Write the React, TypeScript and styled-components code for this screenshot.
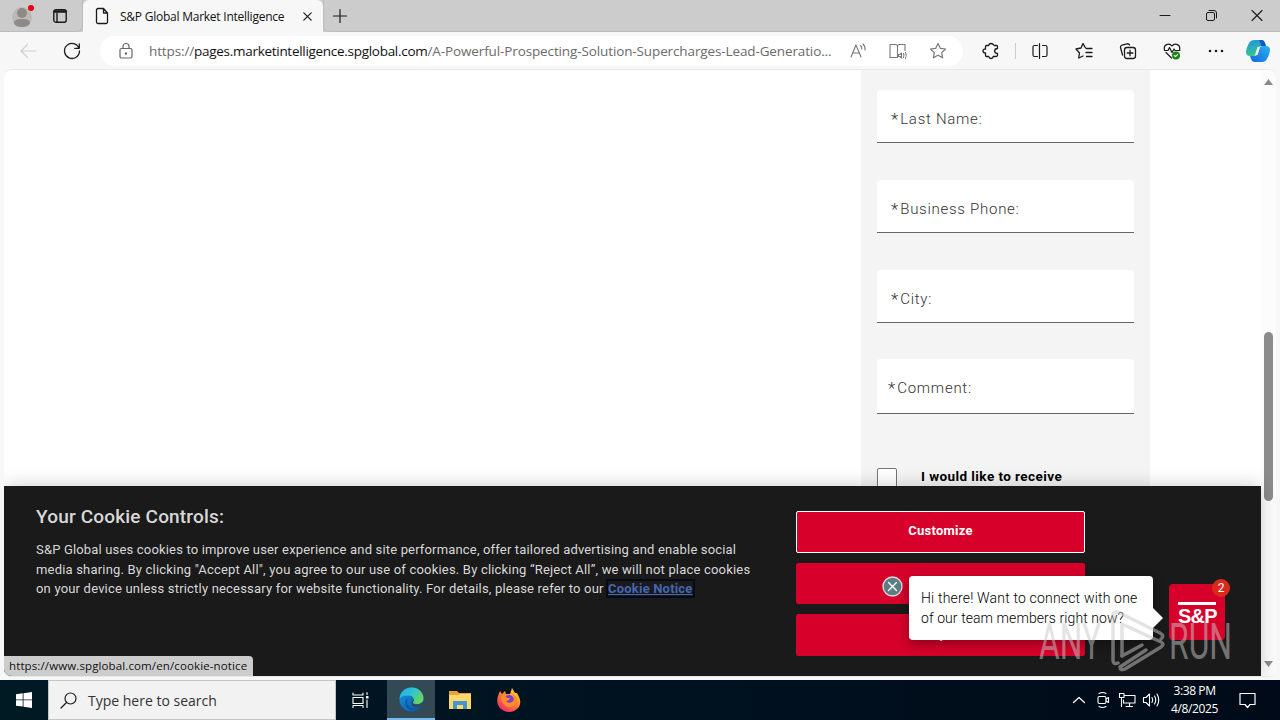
import React from 'react'
import styled, { createGlobalStyle } from 'styled-components'

const GlobalStyle = createGlobalStyle`
  * {
    box-sizing: border-box;
  }
  body {
    margin: 0;
    overflow: hidden;
  }
`

const ui = '"Open Sans", "Noto Sans", sans-serif'
const brand = 'Roboto, "Liberation Sans", sans-serif'

const Desktop = styled.div`
  width: 1280px;
  height: 720px;
  display: flex;
  flex-direction: column;
  background: #f7f7f7;
  font-family: ${ui};
  overflow: hidden;
`

const Label = styled.span<{ $size?: number; $gap?: number; $color?: string; $weight?: number }>`
  font-size: ${(p) => p.$size ?? 12}px;
  letter-spacing: ${(p) => p.$gap ?? 0}px;
  color: ${(p) => p.$color ?? '#111'};
  font-weight: ${(p) => p.$weight ?? 400};
  white-space: nowrap;
`

/* browser chrome */

const TabStrip = styled.div`
  display: flex;
  height: 32px;
  flex: none;
  background: #ccc;
`

const TabStripStart = styled.div`
  display: flex;
  align-items: center;
  gap: 18px;
  width: 83px;
  padding-left: 12px;
  border-right: 1px solid #bdbdbd;
  border-bottom: 1px solid #bdbdbd;
  border-bottom-right-radius: 6px;
`

const Tab = styled.div`
  display: flex;
  align-items: center;
  width: 240px;
  padding: 0 11px 0 12px;
  background: #f7f7f7;
  border-radius: 6px 6px 0 0;
`

const TabTitle = styled(Label)`
  flex: 1;
  margin-left: 11px;
`

const TabStripEnd = styled.div`
  flex: 1;
  display: flex;
  align-items: center;
  justify-content: space-between;
  padding: 0 17px 0 9px;
  border-left: 1px solid #bdbdbd;
  border-bottom: 1px solid #bdbdbd;
  border-bottom-left-radius: 6px;
`

const WindowButtons = styled.div`
  display: flex;
  align-items: center;
  gap: 35px;
`

const Toolbar = styled.div`
  display: flex;
  align-items: center;
  height: 37px;
  flex: none;
  padding: 0 10px 0 19px;
`

const NavIcons = styled.div`
  display: flex;
  gap: 26px;
`

const AddressBar = styled.div`
  display: flex;
  align-items: center;
  flex: none;
  width: 863px;
  height: 30px;
  margin-left: 19px;
  padding: 0 16px 0 18px;
  background: #fff;
  border-radius: 15px;
`

const Url = styled(Label)`
  margin-left: 15px;

  b {
    color: #111;
    font-weight: 400;
    letter-spacing: -0.29px;
  }
`

const AddressIcons = styled.div`
  display: flex;
  align-items: center;
  gap: 21px;
  margin-left: auto;
`

const ToolbarIcons = styled.div`
  display: flex;
  align-items: center;
  gap: 26px;
  padding-left: 19px;
`

const Divider = styled.i`
  width: 1px;
  height: 16px;
  margin: 0 -11px;
  background: #ccc;
`

const CopilotSvg = styled.svg`
  flex: none;
  margin-left: -5px;
`

const Viewport = styled.div`
  position: relative;
  display: flex;
  height: 608px;
  flex: none;
  margin: 0 4px;
  background: #fff;
  border: 1px solid #e8e8e8;
  border-width: 1px 0;
  border-radius: 8px;
  overflow: hidden;
`

const Page = styled.div`
  width: 1257px;
`

const Scrollbar = styled.div`
  display: flex;
  flex-direction: column;
  align-items: center;
  justify-content: space-between;
  width: 15px;
  padding: 9px 0;
  background: #fcfcfc;
`

const Thumb = styled.i`
  width: 9px;
  height: 169px;
  margin-top: 87px;
  border-radius: 5px;
  background: #8b8b8b;
`

/* form */

const FormPanel = styled.div`
  width: 289px;
  height: 416px;
  margin-left: 857px;
  padding: 20px 16px 0;
  background: #f4f4f4;
  font-family: ${brand};
`

const Field = styled.div<{ $tall?: boolean }>`
  display: flex;
  align-items: center;
  width: 257px;
  height: ${(p) => (p.$tall ? 55 : 53)}px;
  margin-bottom: ${(p) => (p.$tall ? 54 : 37)}px;
  padding: ${(p) => (p.$tall ? '4px 0 0 11px' : '5px 0 0 14px')};
  background: #fff;
  border-bottom: 1px solid #666;
  border-radius: 4px 4px 0 0;

  &:nth-child(3) {
    margin-bottom: 36px;
  }
`

const OptIn = styled.label`
  display: flex;
  gap: 24px;
  line-height: 17px;
`

const Checkbox = styled.i`
  width: 20px;
  height: 20px;
  background: #fff;
  border: 1px solid #767676;
  border-radius: 2px;
`

/* cookie banner */

const CookieBanner = styled.section`
  position: absolute;
  left: 0;
  bottom: 0;
  display: flex;
  width: 1257px;
  height: 190px;
  padding: 0 0 0 32px;
  background: #1a1a1a;
  box-shadow: 0 0 18px rgba(0, 0, 0, 0.2);
  color: #d8d8d8;
  font-family: ${brand};
`

const CookieText = styled.div`
  width: 760px;
  padding-top: 18px;
`

const CookieTitle = styled.h2`
  margin: 0 0 10px;
  font-size: 19px;
  font-weight: 500;
  letter-spacing: 0.18px;
  line-height: 25px;
`

const CookieLine = styled.div`
  height: 19.5px;
  line-height: 19.5px;
`

const CookieLink = styled.a`
  margin-left: 1px;
  outline: 2px solid #050a18;
  color: #4665b5;
  font-weight: 700;
  text-decoration: underline;
`

const CookieActions = styled.div`
  display: flex;
  flex-direction: column;
  gap: 10px;
  width: 289px;
  padding-top: 25px;
`

const CookieButton = styled.button<{ $focused?: boolean }>`
  height: ${(p) => (p.$focused ? 42 : 41)}px;
  padding: 0 0 3px;
  background: #d6002a;
  border: 1px solid ${(p) => (p.$focused ? '#fff' : '#d6002a')};
  border-radius: 2px;
  color: #fff;
  font: 700 13px ${brand};
  letter-spacing: 0.25px;

  &:last-child {
    height: 42px;
    padding-bottom: 4px;
  }
`

/* chat */

const ChatBubble = styled.div`
  position: absolute;
  left: 905px;
  top: 506px;
  width: 244px;
  height: 64px;
  padding: 12px;
  background: #fff;
  border-radius: 4px;
  box-shadow: 0 4px 12px rgba(0, 0, 0, 0.35);
  font-family: ${brand};
  line-height: 20px;

  &::after {
    content: '';
    position: absolute;
    left: 244px;
    top: 32px;
    border: 10px solid transparent;
    border-left-color: #fff;
    border-right: 0;
  }
`

const ChatLine = styled(Label)`
  display: block;
`

const ChatDismiss = styled.div`
  position: absolute;
  left: 878px;
  top: 506px;
  width: 21px;
  height: 21px;
`

const ChatLauncher = styled.div`
  position: absolute;
  left: 1165px;
  top: 514px;
  width: 56px;
  height: 56px;
  padding-top: 18px;
  background: #d6002a;
  border-radius: 4px;
  color: #fff;
  font: 700 20px/22px "Liberation Sans", sans-serif;
  text-align: center;
`

const LauncherText = styled.span`
  display: block;
  width: 38px;
  margin: 0 auto;
  border-top: 3px solid #fff;
  letter-spacing: -0.8px;
`

const UnreadBadge = styled.div`
  position: absolute;
  left: 43px;
  top: -5px;
  width: 18px;
  height: 18px;
  border-radius: 9px;
  background: #da291c;
  font: 400 12px/18px ${brand};
`

const StatusBubble = styled.div`
  position: absolute;
  left: 0;
  bottom: 0;
  height: 20px;
  width: 249px;
  padding-left: 5px;
  background: #ccc;
  border-top-right-radius: 4px;
  line-height: 17px;
`

const Watermark = styled.svg`
  position: absolute;
  left: 1034px;
  top: 539px;
  opacity: 0.5;
`

/* taskbar */

const Taskbar = styled.div`
  display: flex;
  align-items: stretch;
  height: 40px;
  margin-top: 3px;
  flex: none;
  background: linear-gradient(90deg, #001a24, #00101e 60%, #000a18);
`

const TaskButton = styled.div<{ $width?: number; $active?: boolean }>`
  display: flex;
  align-items: center;
  justify-content: center;
  width: ${(p) => p.$width ?? 48}px;
  background: ${(p) => (p.$active ? '#334a54' : 'transparent')};
  border-bottom: ${(p) => (p.$active ? '2px solid #76b9ed' : '0')};
`

const SearchBox = styled.div`
  display: flex;
  align-items: center;
  gap: 11px;
  width: 288px;
  padding-left: 11px;
  background: #f2f2f2;
  border: 1px solid #c4c4c4;
`

const Tray = styled.div`
  display: flex;
  align-items: center;
  gap: 8px;
  margin-left: auto;
  padding-right: 24px;
`

const Clock = styled.div`
  display: flex;
  flex-direction: column;
  align-items: center;
  width: 55px;
  margin-right: 9px;
  line-height: 18px;
`

const IconSvg = styled.svg`
  flex: none;
  fill: none;
  stroke-linecap: round;
  stroke-linejoin: round;
  overflow: visible;
`

type IconProps = {
  w?: number
  h?: number
  color?: string
  stroke?: number
  children: React.ReactNode
}

function Icon({ w = 18, h = 18, color = '#1b1b1b', stroke = 1.2, children }: IconProps) {
  return (
    <IconSvg
      width={w}
      height={h}
      viewBox={`0 0 ${w} ${h}`}
      stroke={color}
      strokeWidth={stroke}
    >
      {children}
    </IconSvg>
  )
}

const star = 'M9 1.5l2.3 4.8 5.2.7-3.8 3.6.9 5.2L9 13.3l-4.6 2.5.9-5.2L1.5 7l5.2-.7z'

function Tabs() {
  return (
    <TabStrip>
      <TabStripStart>
        <Icon w={23} h={24} stroke={0}>
          <circle cx='10' cy='13' r='10' fill='#bdb9b7' />
          <circle cx='10' cy='9' r='5' fill='#8e8a88' />
          <path d='M2 19c0-3 3-4 8-4s8 1 8 4c-1 3-4 4-8 4s-7-1-8-4z' fill='#8e8a88' />
          <circle cx='19' cy='4' r='3' fill='#e3000f' />
        </Icon>
        <Icon w={14} h={14} stroke={1.4}>
          <rect x='.8' y='.8' width='12.4' height='12.4' rx='2' />
          <path d='M1.5 2.5h11' strokeWidth='2.5' />
          <path d='M4 4v9' />
        </Icon>
      </TabStripStart>
      <Tab>
        <Icon w={14} h={18} stroke={1.3}>
          <path d='M8.5 1.5H3a1.5 1.5 0 0 0-1.5 1.5v12A1.5 1.5 0 0 0 3 16.5h8a1.5 1.5 0 0 0 1.5-1.5V6zM8.5 1.5V6h4' />
        </Icon>
        <TabTitle $gap={-0.24}>S&amp;P Global Market Intelligence</TabTitle>
        <Icon w={9} h={9} stroke={1.2}>
          <path d='M.8.8l7.4 7.4M8.2.8L.8 8.2' />
        </Icon>
      </Tab>
      <TabStripEnd>
        <Icon w={14} h={14}>
          <path d='M7 .5v13M.5 7h13' />
        </Icon>
        <WindowButtons>
          <Icon w={11} h={11} stroke={1}>
            <path d='M0 5.5h10' />
          </Icon>
          <Icon w={11} h={11} stroke={1}>
            <rect x='.5' y='2.5' width='8' height='8' rx='1.5' />
            <path d='M3 .5h5a2.5 2.5 0 0 1 2.5 2.5v5' />
          </Icon>
          <Icon w={11} h={11} stroke={1.1}>
            <path d='M0 .5l10 10M10 .5l-10 10' />
          </Icon>
        </WindowButtons>
      </TabStripEnd>
    </TabStrip>
  )
}

function AddressRow() {
  return (
    <Toolbar>
      <NavIcons>
        <Icon color='#cfcfcf'>
          <path d='M17 9H2M8.5 2.5L2 9l6.5 6.5' />
        </Icon>
        <Icon stroke={1.3}>
          <path d='M15.9 6A7.5 7.5 0 1 0 16.5 9M16.300 1.8v4.5h-4.5' />
        </Icon>
      </NavIcons>
      <AddressBar>
        <Icon w={16} h={18} color='#666'>
          <rect x='2' y='6.5' width='12' height='9.5' rx='1.5' />
          <path d='M5 6.5V4.5a3 3 0 0 1 6 0v2' />
          <circle cx='8' cy='11.5' r='.6' fill='#666' />
        </Icon>
        <Url $size={13.5} $color='#6b6b6b' $gap={-0.12}>
          https://<b>pages.marketintelligence.spglobal.com</b>/A-Powerful-Prospecting-Solution-Supercharges-Lead-Generatio...
        </Url>
        <AddressIcons>
          <Icon color='#777' stroke={1.1}>
            <path d='M2 15L7 3l5 12M3.5 11h7M11.5 3.5q1.5 1.5 1.2 3.5M14 2q2.5 2.5 2 6' />
          </Icon>
          <Icon w={20} color='#777' stroke={1.1}>
            <path d='M9.5 15.5H2V2.5h5.5q2 0 2 2 0-2 2-2H17v6M9.5 4.5v11' />
            <path d='M10.5 12.5v2H12l1.5 1.5v-5L12 12.5zM15.5 11.5q1 2 0 4M17.5 10.5q1.5 3 0 6' />
          </Icon>
          <Icon color='#777'>
            <path d={star} />
          </Icon>
        </AddressIcons>
      </AddressBar>
      <ToolbarIcons>
        <Icon stroke={1.3}>
          <path d='M6.5 3.500h-2q-1 0-1 1V7q-2.5 0-2.5 2t2.5 2v2.5q0 1 1 1h2.3q.3 2 2.2 2t2.2-2h2.3q2 0 2-1V11.500q-2.8 0-2.8-2.5t2.8-2.5V4.500q0-1-1-1h-2.3Q10.800 1.500 9 1.500T6.500 3.500z' />
        </Icon>
        <Divider />
        <Icon stroke={1.2}>
          <path d='M6.5 3.5H3.500q-1.500 0-1.500 1.500v8q0 1.500 1.500 1.500h3M11.500 3.500h3q1.500 0 1.500 1.500v8q0 1.500-1.500 1.500h-3M8.500 1.500v15' />
        </Icon>
        <Icon stroke={1.3}>
          <path d='M10.5 6L8 1.500 6 6 1 7l3.500 4-.8 5L8 14M11.500 6.500H17M11 10.500h6M11.500 14.500H17' />
        </Icon>
        <Icon stroke={1.3}>
          <rect x='5.5' y='5.5' width='11' height='11' rx='2.5' />
          <path d='M3.500 13L1.500 5.500Q1.200 3.800 3 3.200L8 1.800q1.800-.4 2.600 1.200M11 8.200v5.600M8.200 11h5.600' />
        </Icon>
        <Icon stroke={1.2}>
          <path d='M1.500 8C0 3 6 0 9 4c3-4 9-1 7.500 4M1.500 8.500h3.500l1.500-3 2.500 5 2-3.500 1 1.500h5M3 10.500L8.500 16' />
          <circle cx='13' cy='13.5' r='4' fill='#16820d' stroke='none' />
          <path d='M11.300 13.500l1.200 1.200 2.200-2.400' stroke='#fff' />
        </Icon>
        <Icon>
          <g fill='#1b1b1b' stroke='none'>
            <circle cx='3' cy='9' r='1.3' />
            <circle cx='9' cy='9' r='1.3' />
            <circle cx='15' cy='9' r='1.3' />
          </g>
        </Icon>
        <CopilotLogo />
      </ToolbarIcons>
    </Toolbar>
  )
}

function CopilotLogo() {
  return (
    <CopilotSvg width='24' height='22' viewBox='0 0 24 22'>
      <defs>
        <linearGradient id='cpA' x1='0' y1='0' x2='.3' y2='1'>
          <stop offset='0' stopColor='#1f8fe8' />
          <stop offset='1' stopColor='#37c98b' />
        </linearGradient>
        <linearGradient id='cpB' x1='0' y1='1' x2='1' y2='0'>
          <stop offset='0' stopColor='#1668e0' />
          <stop offset='1' stopColor='#29b3ee' />
        </linearGradient>
      </defs>
      <path d='M9 0h7q2 0 3 3l1 3h-5q-2 0-3 3l-1 4q-1 3-4 3H4q-4 0-4-4 0-3 3-9Q4.5 0 9 0z' fill='url(#cpA)' />
      <path d='M15 22H8q-2 0-3-3l-1-3h5q2 0 3-3l1-4q1-3 4-3h3q4 0 4 4 0 3-3 9-1.5 3-4 3z' fill='url(#cpB)' />
      <path d='M13 0h3q2 0 3 3l1 3h-5q-1-5-2-6z' fill='#1558bd' />
      <path d='M11.5 7H14l-2.5 8H9z' fill='#f7f7f7' />
    </CopilotSvg>
  )
}

const fields = [
  { label: '*Last Name:' },
  { label: '*Business Phone:' },
  { label: '*City:' },
  { label: '*Comment:', tall: true },
]

function LeadForm() {
  return (
    <FormPanel>
      {fields.map(({ label, tall }) => (
        <Field key={label} $tall={tall}>
          <Label $size={17} $gap={2} $color='#333' $weight={300}>
            {label[0]}
          </Label>
          <Label $size={15} $gap={0.73} $color='#333' $weight={300}>
            {label.slice(1)}
          </Label>
        </Field>
      ))}
      <OptIn>
        <Checkbox />
        <Label $size={13.5} $gap={0.43} $weight={700} $color='#000'>
          I would like to receive
        </Label>
      </OptIn>
    </FormPanel>
  )
}

function Cookies() {
  return (
    <CookieBanner>
      <CookieText>
        <CookieTitle>Your Cookie Controls:</CookieTitle>
        <CookieLine>
          <Label $size={13} $gap={0.17} $color='#d8d8d8'>
            S&amp;P Global uses cookies to improve user experience and site performance, offer tailored advertising and enable social
          </Label>
        </CookieLine>
        <CookieLine>
          <Label $size={13} $gap={0.19} $color='#d8d8d8'>
            media sharing. By clicking "Accept All", you agree to our use of cookies. By clicking “Reject All”, we will not place cookies
          </Label>
        </CookieLine>
        <CookieLine>
          <Label $size={13} $gap={0.19} $color='#d8d8d8'>
            on your device unless strictly necessary for website functionality. For details, please refer to our{' '}
            <CookieLink>Cookie Notice</CookieLink>
          </Label>
        </CookieLine>
      </CookieText>
      <CookieActions>
        <CookieButton $focused>Customize</CookieButton>
        <CookieButton />
        <CookieButton>Accept All</CookieButton>
      </CookieActions>
    </CookieBanner>
  )
}

function Chat() {
  return (
    <>
      <ChatDismiss>
        <Icon w={21} h={21} color='#fff' stroke={1.4}>
          <circle cx='10.5' cy='10.5' r='9.5' fill='#5d7d86' stroke='#d8d8d8' />
          <path d='M6.5 6.5l8 8M14.5 6.5l-8 8' />
        </Icon>
      </ChatDismiss>
      <ChatBubble>
        <ChatLine $size={14} $gap={0.18} $weight={300} $color='#000'>Hi there! Want to connect with one</ChatLine>
        <ChatLine $size={14} $gap={0.08} $weight={300} $color='#000'>of our team members right now?</ChatLine>
      </ChatBubble>
      <ChatLauncher>
        <LauncherText>S&amp;P</LauncherText>
        <UnreadBadge>2</UnreadBadge>
      </ChatLauncher>
    </>
  )
}

function AnyRun() {
  return (
    <Watermark width='196' height='64' viewBox='0 0 196 64' fill='#c9c9c9'>
      <g fontFamily='Roboto, sans-serif' fontSize='50'>
        <text x='1' y='50' textLength='62' lengthAdjust='spacingAndGlyphs'>ANY</text>
        <text x='131' y='50' textLength='63' lengthAdjust='spacingAndGlyphs'>RUN</text>
      </g>
      <g fill='none' stroke='#c9c9c9' strokeWidth='3.5' strokeLinejoin='round' strokeLinecap='round'>
        <path d='M80 54q-5 2-5-3V8q0-7 7-4l40 20q5 3 1 6' />
        <path d='M84 47V15l39 18q4 2 0 5L87 60q-5 2-5-2l26-17' />
        <path d='M84 47l20-11' />
      </g>
    </Watermark>
  )
}

function TaskbarRow() {
  return (
    <Taskbar>
      <TaskButton>
        <svg width='16' height='16' viewBox='0 0 16 16' fill='#fff'>
          <path d='M0 2.3L6.7 1.3v6.2H0zM7.5 1.2L16 0v7.5H7.5zM0 8.3h6.7v6.3L0 13.7zM7.5 8.3H16V16l-8.5-1.2z' />
        </svg>
      </TaskButton>
      <SearchBox>
        <Icon w={17} h={17}>
          <circle cx='10.5' cy='6.5' r='5.5' />
          <path d='M6.5 10.5L1 16' />
        </Icon>
        <Label $size={14} $color='#333'>Type here to search</Label>
      </SearchBox>
      <TaskButton $width={51}>
        <Icon w={20} h={16} color='#fff' stroke={1.1}>
          <path d='M1 1v2h10V1M1 5.5h10v6H1zM1 15.5v-2h10v2M15 .5v2M15 8v7.5' />
          <path d='M14.5 4.5h1.5v1.5h-1.5z' fill='#fff' />
        </Icon>
      </TaskButton>
      <TaskButton $active>
        <svg width='25' height='25' viewBox='0 0 25 25'>
          <defs>
            <linearGradient id='edT' x1='0' y1='0' x2='1' y2='.6'>
              <stop offset='0' stopColor='#22a6e8' />
              <stop offset='.5' stopColor='#2fc3d5' />
              <stop offset='1' stopColor='#65d85a' />
            </linearGradient>
            <linearGradient id='edB' x1='0' y1='0' x2='1' y2='1'>
              <stop offset='0' stopColor='#1799e0' />
              <stop offset='1' stopColor='#0b4fa3' />
            </linearGradient>
          </defs>
          <circle cx='12.5' cy='12.5' r='12' fill='url(#edB)' />
          <path d='M.6 12C1 5 6 .5 12.5.5c7 0 12 5 12 10.5 0 4-3 6-6.5 6-3 0-4.5-1-4-2 1.5-2 1-6-3.5-6.5C6 8 2 9 .6 12z' fill='url(#edT)' />
          <path d='M9 11c-3 5 1 11 7 10.5 3 0 5-1 6.5-2.5-5 5.5-15 6-16-2C6 14 7 12 9 11z' fill='#0c59a4' />
          <path d='M14 15c-1 1.5 1 2.5 4 2.5 2 0 4-.7 5.500-2l-1 3.5c-4 2.5-10 1.5-10-3 0-2 1-3 2-4 .5 1 .2 2-.5 3z' fill='#334a54' />
        </svg>
      </TaskButton>
      <TaskButton $width={50}>
        <svg width='22' height='20' viewBox='0 0 22 20'>
          <path d='M0 1h8l2 2h12v16H0z' fill='#e8a33d' />
          <path d='M0 5h9l2-1h11v15H0z' fill='#ffd76b' />
          <path d='M4 11h14v8h-4v-4H8v4H4z' fill='#3f97d3' />
        </svg>
      </TaskButton>
      <TaskButton>
        <svg width='24' height='24' viewBox='0 0 24 24'>
          <defs>
            <linearGradient id='ffA' x1='.9' y1='0' x2='.2' y2='1'>
              <stop offset='0' stopColor='#ffe14a' />
              <stop offset='.45' stopColor='#ff8a2a' />
              <stop offset='1' stopColor='#f0226e' />
            </linearGradient>
          </defs>
          <path d='M1 8l2-5 2 3 3-3 1 3 4 0 2-6 3 5 2 0 2 4c4 8-2 15-10 15S-2 17 1 8z' fill='url(#ffA)' />
          <circle cx='12' cy='12' r='5' fill='#7a3fd0' />
          <path d='M4 8q5-1 6 2l3 0q-1 3-4 3 2 3 6 1 4-3 0-8 6 2 5 8-3 6-9 5-7-2-7-11z' fill='#ff8a2a' />
        </svg>
      </TaskButton>
      <Tray>
        <Icon w={16} h={8} color='#fff'>
          <path d='M2.5 6.5l5.5-5 5.5 5' />
        </Icon>
        <Icon w={16} color='#fff' stroke={1.1}>
          <rect x='3' y='5.5' width='8' height='7' rx='1.5' />
          <path d='M11 8l2.5-1.5v5L11 10M4 2.500q3.500-2 7 0M4 15.500q3.500 2 7 0' />
        </Icon>
        <Icon w={16} h={16} color='#fff' stroke={1.1}>
          <path d='M6 3.5h10v7.5H4.500V8M10.500 11v3.500M7 14.500h6.500M.5 1.500H5v4H.5zM2.500 5.500v9' />
        </Icon>
        <Icon w={16} h={16} color='#fff' stroke={1.1}>
          <path d='M.5 5.5v5H3L6.500 14V2L3 5.500zM9 5.500q1.500 2.500 0 5M11.500 4q2.500 4 0 8M14 2q3.500 6 0 12' />
        </Icon>
        <Clock>
          <Label $color='#fff' $gap={-0.4}>3:38 PM</Label>
          <Label $color='#fff' $gap={-0.4}>4/8/2025</Label>
        </Clock>
        <Icon w={17} h={17} color='#fff'>
          <path d='M1 1.5h15v11h-5L8.500 15.500 6 12.500H1z' />
        </Icon>
      </Tray>
    </Taskbar>
  )
}

export default function App() {
  return (
    <Desktop>
      <GlobalStyle />
      <Tabs />
      <AddressRow />
      <Viewport>
        <Page>
          <LeadForm />
        </Page>
        <Scrollbar>
          <Icon w={9} h={6} stroke={0}>
            <path d='M4.5 0L9 6H0z' fill='#8b8b8b' />
          </Icon>
          <Thumb />
          <Icon w={9} h={6} stroke={0}>
            <path d='M4.5 6L9 0H0z' fill='#8b8b8b' />
          </Icon>
        </Scrollbar>
        <Cookies />
        <Chat />
        <StatusBubble>
          <Label $size={11.5} $gap={0.12}>https://www.spglobal.com/en/cookie-notice</Label>
        </StatusBubble>
        <AnyRun />
      </Viewport>
      <TaskbarRow />
    </Desktop>
  )
}
